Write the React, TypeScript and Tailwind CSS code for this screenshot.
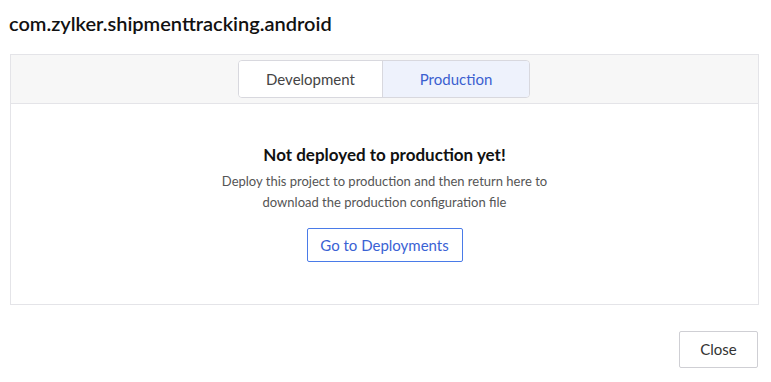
import React from "react";

export default function App() {
  return (
    <div className="w-[771px] h-[382px] bg-white text-[#222]" style={{ fontFamily: "Lato, 'Noto Sans', sans-serif" }}>
      <div className="pl-[9px] pt-[9px] h-[54px]">
        <h1 className="text-[20px] leading-[28px] font-semibold text-[#111]">com.zylker.shipmenttracking.android</h1>
      </div>
      <div className="ml-[10px] w-[749px] h-[251px] border border-[#e4e4e8] flex flex-col">
        <div className="h-[49px] bg-[#f7f7f7] border-b border-[#e4e4e8] flex justify-center pt-[5px]">
          <div className="flex h-[38px] border border-[#d8d8de] rounded-[4px] overflow-hidden ml-[-1px]">
            <div className="w-[144px] bg-white flex items-center justify-center text-[15px] text-[#444] border-r border-[#d8d8de]">Development</div>
            <div className="w-[146px] bg-[#eef2fc] flex items-center justify-center text-[15px] text-[#3b5fd0]">Production</div>
          </div>
        </div>
        <div className="flex flex-col items-center pt-[40px]">
          <div className="text-[17px] leading-[22px] font-bold text-[#111]">Not deployed to production yet!</div>
          <div className="mt-[5px] text-[13px] leading-[21px] text-[#555] text-center">
            Deploy this project to production and then return here to
            <br />
            download the production configuration file
          </div>
          <button className="mt-[15px] w-[156px] h-[34px] border border-[#4a7be8] rounded-[2px] text-[15px] text-[#3a62d4] bg-white">Go to Deployments</button>
        </div>
      </div>
      <div className="flex justify-end pr-[13px] pt-[26px]">
        <button className="w-[79px] h-[37px] border border-[#cfcfd4] rounded-[2px] text-[15px] text-[#333] bg-white">Close</button>
      </div>
    </div>
  );
}
